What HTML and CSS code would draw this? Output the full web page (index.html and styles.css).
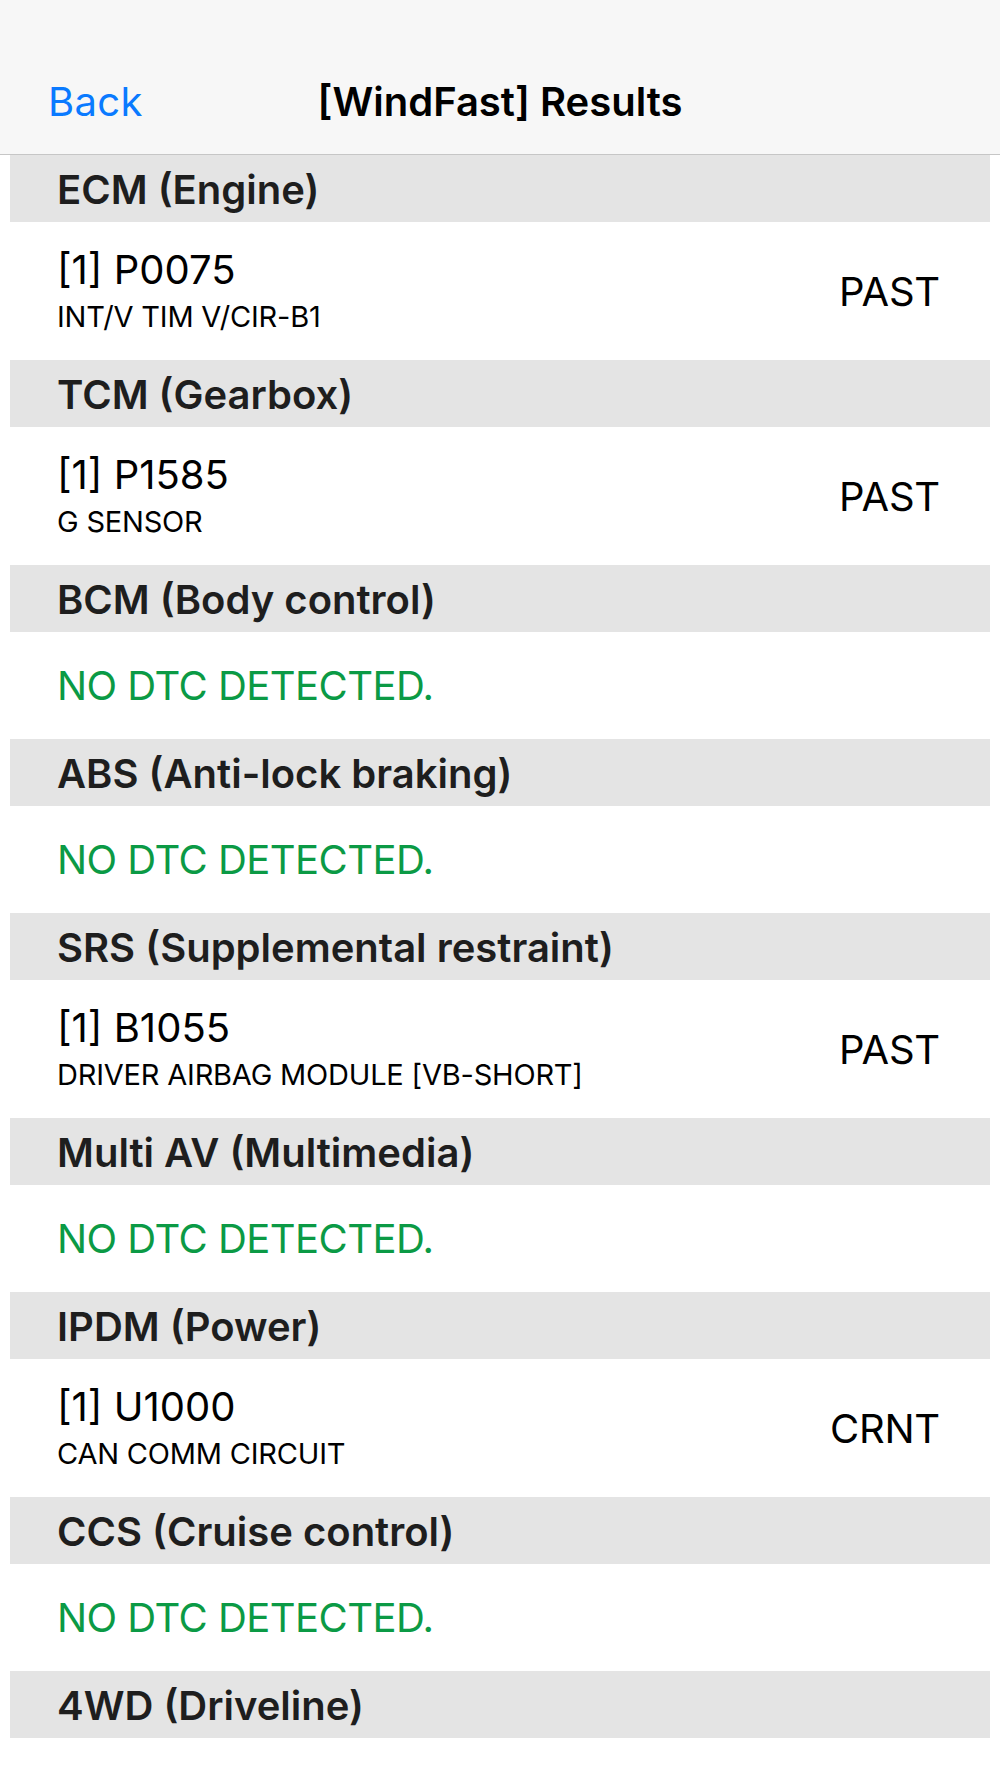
FILE: index.html
```html
<!DOCTYPE html>
<html lang="en">
<head>
<meta charset="utf-8">
<title>[WindFast] Results</title>
<link rel="stylesheet" href="styles.css">
</head>
<body>
<header class="navbar">
  <div class="nav-left"><a class="back" href="#">Back</a></div>
  <h1 class="title">[WindFast] Results</h1>
  <div class="nav-right"></div>
</header>
<main class="list">
  <section class="group">
    <div class="group-header">ECM (Engine)</div>
    <div class="row dtc-row">
      <div class="dtc"><div class="code">[1] P0075</div><div class="desc">INT/V TIM V/CIR-B1</div></div>
      <div class="status">PAST</div>
    </div>
  </section>
  <section class="group">
    <div class="group-header">TCM (Gearbox)</div>
    <div class="row dtc-row">
      <div class="dtc"><div class="code">[1] P1585</div><div class="desc">G SENSOR</div></div>
      <div class="status">PAST</div>
    </div>
  </section>
  <section class="group">
    <div class="group-header">BCM (Body control)</div>
    <div class="row ok-row"><div class="ok">NO DTC DETECTED.</div></div>
  </section>
  <section class="group">
    <div class="group-header">ABS (Anti-lock braking)</div>
    <div class="row ok-row"><div class="ok">NO DTC DETECTED.</div></div>
  </section>
  <section class="group">
    <div class="group-header">SRS (Supplemental restraint)</div>
    <div class="row dtc-row">
      <div class="dtc"><div class="code">[1] B1055</div><div class="desc">DRIVER AIRBAG MODULE [VB-SHORT]</div></div>
      <div class="status">PAST</div>
    </div>
  </section>
  <section class="group">
    <div class="group-header">Multi AV (Multimedia)</div>
    <div class="row ok-row"><div class="ok">NO DTC DETECTED.</div></div>
  </section>
  <section class="group">
    <div class="group-header">IPDM (Power)</div>
    <div class="row dtc-row">
      <div class="dtc"><div class="code">[1] U1000</div><div class="desc">CAN COMM CIRCUIT</div></div>
      <div class="status">CRNT</div>
    </div>
  </section>
  <section class="group">
    <div class="group-header">CCS (Cruise control)</div>
    <div class="row ok-row"><div class="ok">NO DTC DETECTED.</div></div>
  </section>
  <section class="group">
    <div class="group-header">4WD (Driveline)</div>
  </section>
</main>
</body>
</html>
```

FILE: styles.css
```css
* { box-sizing: border-box; }
html, body { margin: 0; padding: 0; background: #ffffff; }
body {
  font-family: Inter, "Noto Sans", "Liberation Sans", sans-serif;
  color: #000;
  -webkit-font-smoothing: antialiased;
}
.navbar {
  height: 155px;
  background: #f7f7f7;
  border-bottom: 1px solid #c6c6c6;
  display: grid;
  grid-template-columns: 1fr auto 1fr;
  align-items: start;
  padding-top: 78px;
}
.nav-left { padding-left: 48px; }
.back {
  color: #0a7aff;
  text-decoration: none;
  font-size: 40px;
  line-height: 48px;
  letter-spacing: 0.3px;
}
.title {
  margin: 0;
  font-size: 40px;
  line-height: 48px;
  font-weight: 600;
  color: #000;
}
.list { margin: 0 10px; }
.group-header {
  height: 67px;
  padding-top: 2px;
  line-height: 65px;
  background: #e4e4e4;
  padding-left: 47px;
  font-size: 40px;
  font-weight: 600;
  color: #1e1e1e;
}
.row {
  display: flex;
  align-items: center;
  justify-content: space-between;
  padding-left: 47px;
  padding-right: 50px;
}
.dtc-row { padding-top: 24px; padding-bottom: 25px; }
.ok-row { padding-top: 30px; padding-bottom: 29px; }
.code { font-size: 40px; line-height: 48px; }
.desc { font-size: 29px; line-height: 36px; margin-top: 5px; letter-spacing: -0.2px; }
.status { font-size: 40px; line-height: 48px; margin-top: 3px; letter-spacing: -0.2px; }
.ok { font-size: 40px; line-height: 48px; color: #0b9a45; letter-spacing: -0.55px; }
```
